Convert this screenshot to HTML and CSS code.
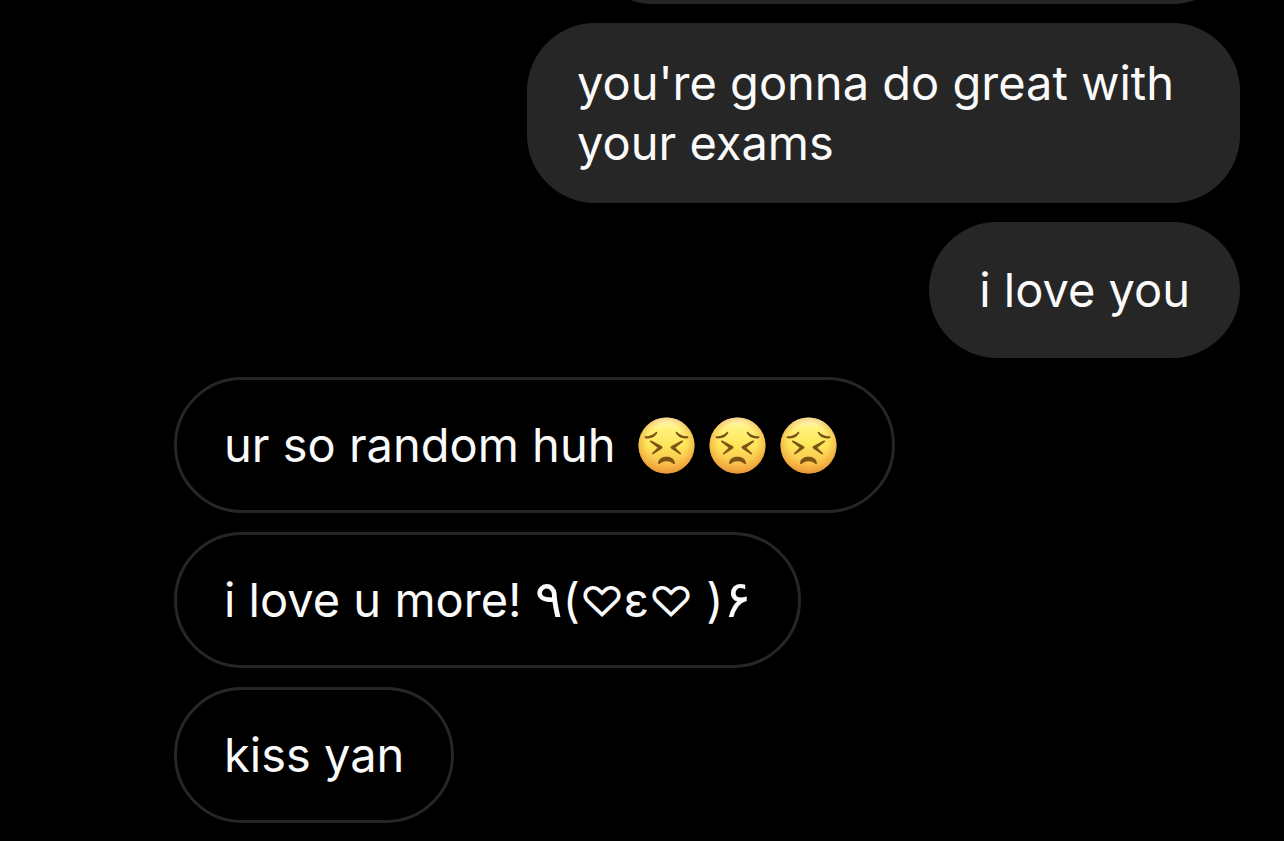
FILE: index.html
```html
<!DOCTYPE html>
<html lang="en">
<head>
<meta charset="utf-8">
<title>Chat</title>
<link rel="stylesheet" href="styles.css">
</head>
<body>

<!-- shared emoji drawing -->
<svg class="defs" width="0" height="0" aria-hidden="true">
  <defs>
    <linearGradient id="face" x1="0" y1="0" x2="0" y2="1">
      <stop offset="0" stop-color="#fffbd0"/>
      <stop offset="0.2" stop-color="#fff27c"/>
      <stop offset="0.5" stop-color="#fde558"/>
      <stop offset="0.8" stop-color="#fac74f"/>
      <stop offset="1" stop-color="#f2a840"/>
    </linearGradient>
    <radialGradient id="edge" cx="0.5" cy="0.46" r="0.56">
      <stop offset="0.6" stop-color="#f0a63c" stop-opacity="0"/>
      <stop offset="0.85" stop-color="#ec9c38" stop-opacity="0.5"/>
      <stop offset="1" stop-color="#e28b30" stop-opacity="0.8"/>
    </radialGradient>
    <symbol id="persevere" viewBox="0 0 58 58">
      <circle cx="29" cy="29" r="28.5" fill="url(#face)"/>
      <circle cx="29" cy="29" r="28.5" fill="url(#edge)"/>
      <g fill="#7a5216">
        <path d="M7 19.500 Q14 20 18.500 15 Q20 14.500 19.500 16.500 Q15 23 7.500 21.500 Q6 20.500 7 19.500 Z"/>
        <path d="M51 19.500 Q44 20 39.500 15 Q38 14.500 38.500 16.500 Q43 23 50.500 21.500 Q52 20.500 51 19.500 Z"/>
        <path d="M12 24.500 Q12 23.500 14 24.200 L24 29.500 Q26 31 24 32.300 L15.500 38 Q13.500 38.500 14.500 36.700 L20 31.300 L12.500 25.500 Z"/>
        <path d="M46 24.500 Q46 23.500 44 24.200 L34 29.500 Q32 31 34 32.300 L42.500 38 Q44.500 38.500 43.500 36.700 L38 31.300 L45.500 25.500 Z"/>
        <path d="M20.500 46.500 C21.500 38.500 36.500 38.500 37.500 46.500 C38 49 36 47.500 34.500 46.500 C31 44.500 27 44.500 23.500 46.500 C22 47.500 20 49 20.500 46.500 Z"/>
      </g>
    </symbol>
  </defs>
</svg>

<main class="chat">
  <div class="bubble sent earlier"></div>
  <div class="bubble sent"><p>you're gonna do great with your exams</p></div>
  <div class="bubble sent"><p>i love you</p></div>
  <div class="bubble received">
    <p>ur so random huh</p>
    <span class="emojis">
      <svg class="emoji" role="img" aria-label="persevering face"><use href="#persevere"/></svg>
      <svg class="emoji" role="img" aria-label="persevering face"><use href="#persevere"/></svg>
      <svg class="emoji" role="img" aria-label="persevering face"><use href="#persevere"/></svg>
    </span>
  </div>
  <div class="bubble received"><p>i love u more! <span class="kaomoji"><span class="arm">٩</span>(<span class="heart">♡</span>ε<span class="heart">♡</span> )<span class="arm">۶</span></span></p></div>
  <div class="bubble received"><p>kiss yan</p></div>
</main>

</body>
</html>
```
FILE: styles.css
```css
* {
    box-sizing: border-box;
}

body {
    margin: 0;
    background: #000;
    color: #fafafa;
    font-family: Inter, "DejaVu Sans", sans-serif;
    font-size: 47px;
    line-height: 60px;
}

.defs {
    position: absolute;
}

/* newest message stays at the bottom, older ones run off the top */
.chat {
    display: flex;
    flex-direction: column;
    justify-content: flex-end;
    align-items: flex-start;
    gap: 19px;
    height: 100vh;
    padding: 0 44px 18px 174px;
    overflow: hidden;
}

.bubble {
    display: flex;
    align-items: center;
    flex-shrink: 0;
    max-width: 713px;
    min-height: 136px;
    padding: 30px 50px;
    border-radius: 68px;
}

.bubble p {
    margin: 0;
}

.sent {
    align-self: flex-end;
    background: #262626;
}

.earlier {
    width: 655px;
}

.received {
    max-width: 730px;
    padding: 27px 47px;
    border: 3px solid #262626;
}

.emojis {
    display: flex;
    gap: 14px;
    padding: 0 8px 0 22px;
}

.emoji {
    width: 57px;
    height: 57px;
}

/* keeps the arabic digits in typed order */
.kaomoji {
    direction: ltr;
    unicode-bidi: bidi-override;
}

.kaomoji span {
    line-height: 1;
    unicode-bidi: bidi-override;
}

.arm {
    font-size: 52px;
}

.heart {
    font-size: 43px;
}
```
